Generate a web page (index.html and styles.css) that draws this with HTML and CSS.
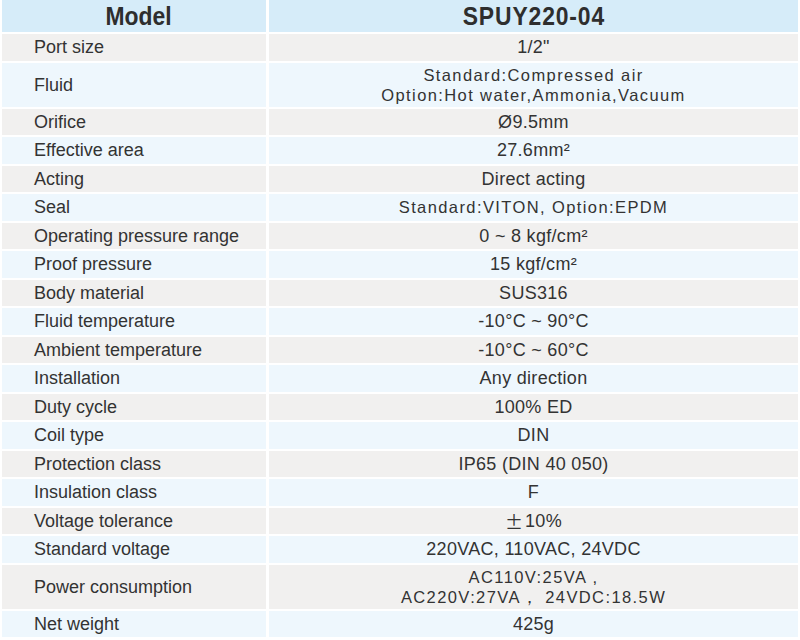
FILE: index.html
```html
<!DOCTYPE html>
<html lang="en">
<head>
<meta charset="utf-8">
<title>SPUY220-04 Specifications</title>
<link rel="stylesheet" href="styles.css">
</head>
<body>
<div class="spec">
  <div class="row head"><div class="cell label"><span class="narrow">Model</span></div><div class="cell value"><span class="narrow">SPUY220-04</span></div></div>
  <div class="row gray"><div class="cell label">Port size</div><div class="cell value">1/2"</div></div>
  <div class="row blue tall"><div class="cell label">Fluid</div><div class="cell value spaced">Standard:Compressed air<br>Option:Hot water,Ammonia,Vacuum</div></div>
  <div class="row gray"><div class="cell label">Orifice</div><div class="cell value">Ø9.5mm</div></div>
  <div class="row blue"><div class="cell label">Effective area</div><div class="cell value">27.6mm²</div></div>
  <div class="row gray"><div class="cell label">Acting</div><div class="cell value">Direct acting</div></div>
  <div class="row blue"><div class="cell label">Seal</div><div class="cell value spaced">Standard:VITON, Option:EPDM</div></div>
  <div class="row gray"><div class="cell label">Operating pressure range</div><div class="cell value">0 ~ 8 kgf/cm²</div></div>
  <div class="row blue"><div class="cell label">Proof pressure</div><div class="cell value">15 kgf/cm²</div></div>
  <div class="row gray"><div class="cell label">Body material</div><div class="cell value">SUS316</div></div>
  <div class="row blue"><div class="cell label">Fluid temperature</div><div class="cell value">-10°C ~ 90°C</div></div>
  <div class="row gray"><div class="cell label">Ambient temperature</div><div class="cell value">-10°C ~ 60°C</div></div>
  <div class="row blue"><div class="cell label">Installation</div><div class="cell value">Any direction</div></div>
  <div class="row gray"><div class="cell label">Duty cycle</div><div class="cell value">100% ED</div></div>
  <div class="row blue"><div class="cell label">Coil type</div><div class="cell value">DIN</div></div>
  <div class="row gray"><div class="cell label">Protection class</div><div class="cell value">IP65 (DIN 40 050)</div></div>
  <div class="row blue"><div class="cell label">Insulation class</div><div class="cell value">F</div></div>
  <div class="row gray"><div class="cell label">Voltage tolerance</div><div class="cell value"><span class="pm">±</span>10%</div></div>
  <div class="row blue"><div class="cell label">Standard voltage</div><div class="cell value">220VAC, 110VAC, 24VDC</div></div>
  <div class="row gray tall"><div class="cell label">Power consumption</div><div class="cell value spaced">AC110V:25VA ,<br>AC220V:27VA， 24VDC:18.5W</div></div>
  <div class="row blue"><div class="cell label">Net weight</div><div class="cell value">425g</div></div>
</div>
</body>
</html>
```
FILE: styles.css
```css
html, body {
  margin: 0;
  padding: 0;
  background: #ffffff;
}

body {
  width: 800px;
  height: 640px;
  overflow: hidden;
  font-family: "Liberation Sans", Arial, sans-serif;
  color: #333333;
}

.spec {
  display: flex;
  flex-direction: column;
  gap: 2px;
  padding: 0 3px 0 2px;
}

.row {
  display: grid;
  grid-template-columns: 264px 529px;
  column-gap: 3px;
  height: 26.5px;
}

.row.tall {
  height: 44px;
}

.row.head {
  height: 32px;
}

.cell {
  display: flex;
  align-items: center;
  font-size: 18px;
  line-height: 20px;
}

.label {
  padding-left: 32px;
}

.value {
  justify-content: center;
  text-align: center;
  letter-spacing: 0.3px;
}

.value.spaced {
  font-size: 16.5px;
  letter-spacing: 1.4px;
  line-height: 20px;
}

.pm {
  font-family: "Noto Sans CJK SC", sans-serif;
  letter-spacing: 0;
  margin-right: 2px;
}

.gray .cell {
  background: #f1f0ef;
}

.blue .cell {
  background: #eef7fd;
}

.head .cell {
  background: #d6ecf9;
  font-weight: bold;
  font-size: 26px;
  line-height: 30px;
  justify-content: center;
  padding: 0;
  color: #2e2e2e;
}

.head .label {
  padding-left: 10px;
}

.narrow {
  display: inline-block;
  transform: scaleX(0.88);
}

.head .value {
  letter-spacing: 1px;
}
```
